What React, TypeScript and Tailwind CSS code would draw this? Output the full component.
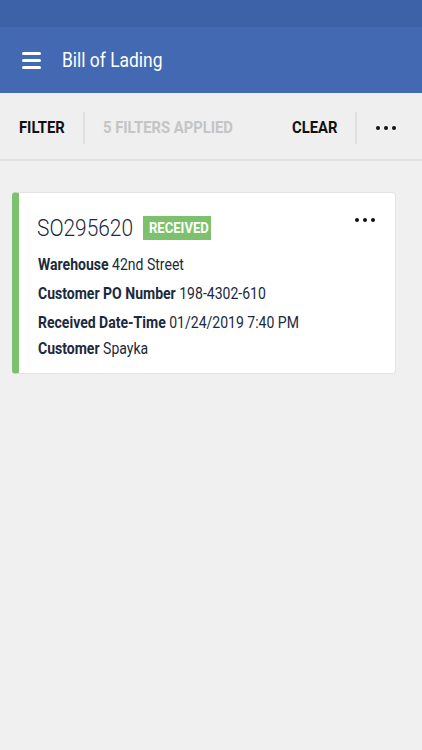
import React from "react";

function Dots({ className = "" }: { className?: string }) {
  return (
    <div className={"flex items-center gap-[4px] " + className}>
      <span className="block w-[4px] h-[4px] rounded-full bg-[#111]" />
      <span className="block w-[4px] h-[4px] rounded-full bg-[#111]" />
      <span className="block w-[4px] h-[4px] rounded-full bg-[#111]" />
    </div>
  );
}

function C({ w, className = "", children }: { w: string; className?: string; children: React.ReactNode }) {
  return (
    <span className={"inline-block whitespace-nowrap " + w}>
      <span className={"inline-block whitespace-nowrap origin-left scale-x-[0.87] " + className}>{children}</span>
    </span>
  );
}

function Row({ label, value, extra = "" }: { label: string; value: string; extra?: string }) {
  return (
    <div className={"text-[16.5px] leading-[29px] text-[#1b2a3c] " + extra}>
      <span className="inline-block whitespace-nowrap origin-left scale-x-[0.85]">
        <span className="font-bold">{label}</span> <span>{value}</span>
      </span>
    </div>
  );
}

export default function App() {
  return (
    <div
      className="w-[422px] h-[750px] bg-[#f0f0f0] flex flex-col"
      style={{ fontFamily: "Roboto, 'Noto Sans', sans-serif" }}
    >
      <div className="h-[27px] bg-[#3d62a8]" />
      <div className="h-[66px] bg-[#4369b2] flex items-center pl-[22px]">
        <div className="flex flex-col gap-[4px] w-[19px]">
          <span className="block h-[3px] bg-white rounded-full" />
          <span className="block h-[3px] bg-white rounded-full" />
          <span className="block h-[3px] bg-white rounded-full" />
        </div>
        <C w="w-[101px] ml-[21px]" className="text-white text-[20px]">Bill of Lading</C>
      </div>
      <div className="h-[68px] pt-[4px] bg-[#efefef] border-b-2 border-[#e2e2e2] flex items-center text-[17px] font-bold">
        <C w="w-[45px] ml-[19px]" className="text-[#111]">FILTER</C>
        <span className="ml-[19px] w-[2px] h-[32px] bg-[#dedede]" />
        <C w="w-[128px] ml-[18px]" className="text-[#c4c4c4]">5 FILTERS APPLIED</C>
        <C w="w-[44px] ml-auto" className="text-[#111]">CLEAR</C>
        <span className="ml-[19px] w-[2px] h-[32px] bg-[#dedede]" />
        <Dots className="ml-[19px] mr-[26px]" />
      </div>
      <div className="px-[12px] pt-[31px] pr-[26px]">
        <div className="relative bg-white rounded-[4px] border border-[#e3e3e3] border-l-[7px] border-l-[#7dc16c] pl-[18px] pt-[20px] pb-[10px]">
          <div className="flex items-center">
            <C w="w-[95px]" className="text-[24px] font-light text-[#1b2a3c] leading-[30px]">SO295620</C>
            <span className="ml-[11px] bg-[#7dc16c] w-[68px] h-[24px] flex items-center pl-[6px]">
              <C w="w-[58px]" className="text-white text-[15px] font-bold">RECEIVED</C>
            </span>
          </div>
          <div className="mt-[7px] ml-[1px]">
            <Row label="Warehouse" value="42nd Street" />
            <Row label="Customer PO Number" value="198-4302-610" />
            <Row label="Received Date-Time" value="01/24/2019 7:40 PM" />
            <Row label="Customer" value="Spayka" extra="-mt-[3px]" />
          </div>
          <Dots className="absolute right-[20px] top-[25px]" />
        </div>
      </div>
    </div>
  );
}
